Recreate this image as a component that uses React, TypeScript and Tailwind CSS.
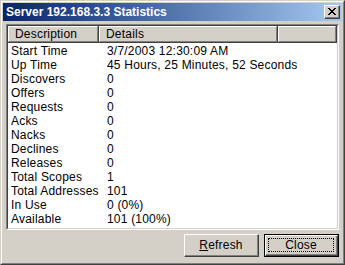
import React from "react";

const rows: [string, string][] = [
  ["Start Time", "3/7/2003 12:30:09 AM"],
  ["Up Time", "45 Hours, 25 Minutes, 52 Seconds"],
  ["Discovers", "0"],
  ["Offers", "0"],
  ["Requests", "0"],
  ["Acks", "0"],
  ["Nacks", "0"],
  ["Declines", "0"],
  ["Releases", "0"],
  ["Total Scopes", "1"],
  ["Total Addresses", "101"],
  ["In Use", "0 (0%)"],
  ["Available", "101 (100%)"],
];

function HeaderCell({ w, label }: { w: string; label: string }) {
  return (
    <div className={`${w} h-[17px] shrink-0 border-r border-b border-r-[#404040] border-b-[#404040]`}>
      <div className="h-full border-l border-t border-l-white border-t-white border-r border-b border-r-[#808080] border-b-[#808080] pl-[6px] leading-[14px]">
        {label}
      </div>
    </div>
  );
}

export default function App() {
  return (
    <div
      className="w-[345px] h-[265px] bg-[#D4D0C8] border border-t-[#D4D0C8] border-l-[#D4D0C8] border-r-[#404040] border-b-[#404040] text-[12px] text-black tracking-[0.2px]"
      style={{ fontFamily: '"Liberation Sans", Arial, sans-serif' }}
    >
      <div className="h-full border border-t-white border-l-white border-r-[#808080] border-b-[#808080] p-px flex flex-col">
        {/* Title bar */}
        <div className="h-[18px] flex items-center justify-between bg-gradient-to-r from-[#0A246A] to-[#A6CAF0] pl-[3px] pr-[2px]">
          <span className="text-white font-bold text-[12px] tracking-normal leading-none">Server 192.168.3.3 Statistics</span>
          <div className="w-[16px] h-[14px] bg-[#D4D0C8] border border-t-white border-l-white border-r-[#404040] border-b-[#404040]">
            <div className="w-full h-full border-r border-b border-r-[#808080] border-b-[#808080] flex items-center justify-center">
              <svg width="8" height="7" viewBox="0 0 8 7">
                <path d="M0 0h2v1h1v1h2V1h1V0h2v1H7v1H6v1H5v1h1v1h1v1h1v1H6V6H5V5H3v1H2v1H0V6h1V5h1V4h1V3H2V2H1V1H0z" fill="#000" />
              </svg>
            </div>
          </div>
        </div>

        {/* List */}
        <div className="mt-[3px] mx-[3px] h-[206px] border border-t-[#808080] border-l-[#808080] border-r-white border-b-white">
          <div className="h-full border border-t-[#404040] border-l-[#404040] border-r-[#D4D0C8] border-b-[#D4D0C8] bg-white flex flex-col overflow-hidden">
            <div className="flex bg-[#D4D0C8]">
              <HeaderCell w="w-[91px]" label="Description" />
              <HeaderCell w="w-[179px]" label="Details" />
              <HeaderCell w="flex-1" label="" />
            </div>
            <div className="pt-[1px]">
              {rows.map(([a, b]) => (
                <div key={a} className="flex h-[14px] leading-[14px]">
                  <div className="w-[91px] pl-[3px] shrink-0 whitespace-nowrap">{a}</div>
                  <div className="pl-[8px] whitespace-nowrap">{b}</div>
                </div>
              ))}
            </div>
          </div>
        </div>

        {/* Buttons */}
        <div className="flex justify-end gap-[5px] mt-[4px] mr-[3px]">
          <div className="w-[75px] h-[23px] border border-t-white border-l-white border-r-[#404040] border-b-[#404040]">
            <div className="w-full h-full border-r border-b border-r-[#808080] border-b-[#808080] flex items-center justify-center">
              <span><span className="underline">R</span>efresh</span>
            </div>
          </div>
          <div className="w-[75px] h-[23px] border border-black">
            <div className="w-full h-full border border-t-white border-l-white border-r-[#404040] border-b-[#404040]">
              <div className="w-full h-full border-r border-b border-r-[#808080] border-b-[#808080] p-[2px]">
                <div className="w-full h-full border border-dotted border-black flex items-center justify-center">
                  Close
                </div>
              </div>
            </div>
          </div>
        </div>
      </div>
    </div>
  );
}
